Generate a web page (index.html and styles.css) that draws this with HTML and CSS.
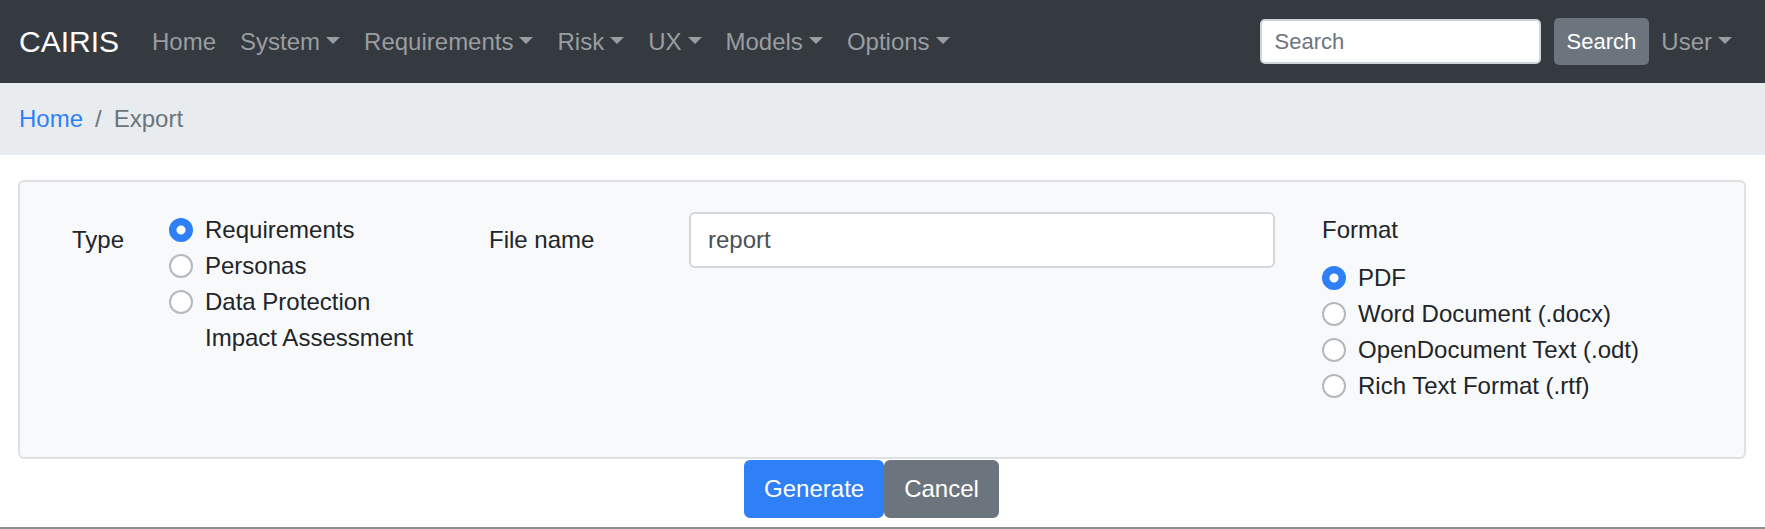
FILE: index.html
```html
<!DOCTYPE html>
<html lang="en">
<head>
<meta charset="utf-8">
<title>CAIRIS - Export</title>
<link rel="stylesheet" href="styles.css">
</head>
<body>
<nav class="navbar">
  <a class="brand" href="#">CAIRIS</a>
  <ul class="nav-links">
    <li><a class="nav-link" href="#">Home</a></li>
    <li><a class="nav-link dropdown" href="#">System</a></li>
    <li><a class="nav-link dropdown" href="#">Requirements</a></li>
    <li><a class="nav-link dropdown" href="#">Risk</a></li>
    <li><a class="nav-link dropdown" href="#">UX</a></li>
    <li><a class="nav-link dropdown" href="#">Models</a></li>
    <li><a class="nav-link dropdown" href="#">Options</a></li>
  </ul>
  <div class="nav-right">
    <form class="search-form">
      <input class="search-input" type="text" placeholder="Search">
      <button class="search-btn" type="button">Search</button>
    </form>
    <a class="nav-link dropdown" href="#">User</a>
  </div>
</nav>

<ol class="breadcrumb">
  <li><a href="#">Home</a></li>
  <li class="sep">/</li>
  <li class="active">Export</li>
</ol>

<section class="card">
  <div class="form-grid">
    <div class="col-label">Type</div>
    <div class="type-options">
      <label class="radio"><input type="radio" name="type" checked><span>Requirements</span></label>
      <label class="radio"><input type="radio" name="type"><span>Personas</span></label>
      <label class="radio"><input type="radio" name="type"><span>Data Protection Impact Assessment</span></label>
    </div>
    <div class="col-label">File name</div>
    <div class="file-field">
      <input class="text-input" type="text" value="report">
    </div>
    <div class="format-group">
      <div class="format-label">Format</div>
      <label class="radio"><input type="radio" name="fmt" checked><span>PDF</span></label>
      <label class="radio"><input type="radio" name="fmt"><span>Word Document (.docx)</span></label>
      <label class="radio"><input type="radio" name="fmt"><span>OpenDocument Text (.odt)</span></label>
      <label class="radio"><input type="radio" name="fmt"><span>Rich Text Format (.rtf)</span></label>
    </div>
  </div>
</section>

<div class="actions">
  <button class="btn btn-primary" type="button">Generate</button>
  <button class="btn btn-secondary" type="button">Cancel</button>
</div>
<div class="footer-rule"></div>
</body>
</html>
```

FILE: styles.css
```css
* { box-sizing: border-box; }

html, body {
  margin: 0;
  padding: 0;
}

body {
  font-family: "Liberation Sans", Arial, Helvetica, sans-serif;
  font-size: 24px;
  line-height: 1.5;
  color: #212529;
  background: #fff;
}

a { text-decoration: none; }

/* Navbar */
.navbar {
  display: flex;
  align-items: center;
  height: 83px;
  padding: 0 21px 0 19px;
  background: #343a40;
}

.brand {
  color: #fff;
  font-size: 30px;
  line-height: 45px;
  margin-right: 21px;
}

.nav-links {
  display: flex;
  list-style: none;
  margin: 0;
  padding: 0;
}

.nav-link {
  display: block;
  padding: 0 12px;
  color: #9a9da0;
  line-height: 36px;
}

.dropdown::after {
  content: "";
  display: inline-block;
  margin-left: 6px;
  vertical-align: 6px;
  border-top: 7px solid #9a9da0;
  border-left: 7px solid transparent;
  border-right: 7px solid transparent;
}

.nav-right {
  display: flex;
  align-items: center;
  margin-left: auto;
}

.search-form {
  display: flex;
  align-items: center;
  margin: 0;
}

.search-input {
  width: 281px;
  height: 45px;
  padding: 6px 13px;
  font-family: inherit;
  font-size: 22px;
  color: #495057;
  border: 2px solid #ced4da;
  border-radius: 5px;
  background: #fff;
}

.search-input::placeholder { color: #6c757d; }

.search-btn {
  margin-left: 13px;
  height: 47px;
  padding: 6px 13px;
  font-family: inherit;
  font-size: 22px;
  color: #fff;
  background: #6c757d;
  border: 0;
  border-radius: 5px;
}

/* Breadcrumb */
.breadcrumb {
  display: flex;
  list-style: none;
  margin: 0 0 25px;
  padding: 18px 19px;
  background: #e9ecef;
  line-height: 36px;
}

.breadcrumb a { color: #2f7ff7; }

.breadcrumb .sep {
  padding: 0 12px;
  color: #6c757d;
}

.breadcrumb .active { color: #6c757d; }

/* Card */
.card {
  margin: 0 19px 0 18px;
  padding: 30px 0 53px 52px;
  background: #f8f9fa;
  border: 2px solid #dfe0e3;
  border-radius: 6px;
}

.form-grid {
  display: grid;
  grid-template-columns: 97px 320px 200px 586px 1fr;
  align-items: start;
}

.col-label {
  padding-top: 10px;
  line-height: 36px;
}

.type-options {
  width: 266px;
}

.radio {
  display: flex;
  align-items: flex-start;
  gap: 12px;
  line-height: 36px;
  color: #212529;
}

.radio input {
  appearance: none;
  -webkit-appearance: none;
  flex: 0 0 24px;
  width: 24px;
  height: 24px;
  margin: 6px 0 0;
  border: 2px solid #b3b9bf;
  border-radius: 50%;
  background: #fff;
}

.radio input:checked {
  border-color: #2f7ff7;
  background: radial-gradient(circle, #fff 0 4px, #2f7ff7 5px);
}

.text-input {
  width: 586px;
  height: 56px;
  padding: 0 17px;
  font-family: inherit;
  font-size: 24px;
  color: #495057;
  border: 2px solid #d3d7db;
  border-radius: 6px;
  background: #fff;
}

.format-group {
  padding-left: 47px;
}

.format-label {
  line-height: 36px;
  margin-bottom: 12px;
}

/* Actions */
.actions {
  display: flex;
  justify-content: center;
  padding-right: 22px;
  margin-top: 1px;
}

.btn {
  height: 58px;
  padding: 9px 18px;
  font-family: inherit;
  font-size: 24px;
  line-height: 36px;
  color: #fff;
  border: 2px solid transparent;
  border-radius: 6px;
}

.btn-primary {
  background: #2f7ff7;
  border-color: #2f7ff7;
}

.btn-secondary {
  background: #6c757d;
  border-color: #6c757d;
}

.footer-rule {
  margin-top: 9px;
  border-top: 2px solid #8e8e8e;
}
```
